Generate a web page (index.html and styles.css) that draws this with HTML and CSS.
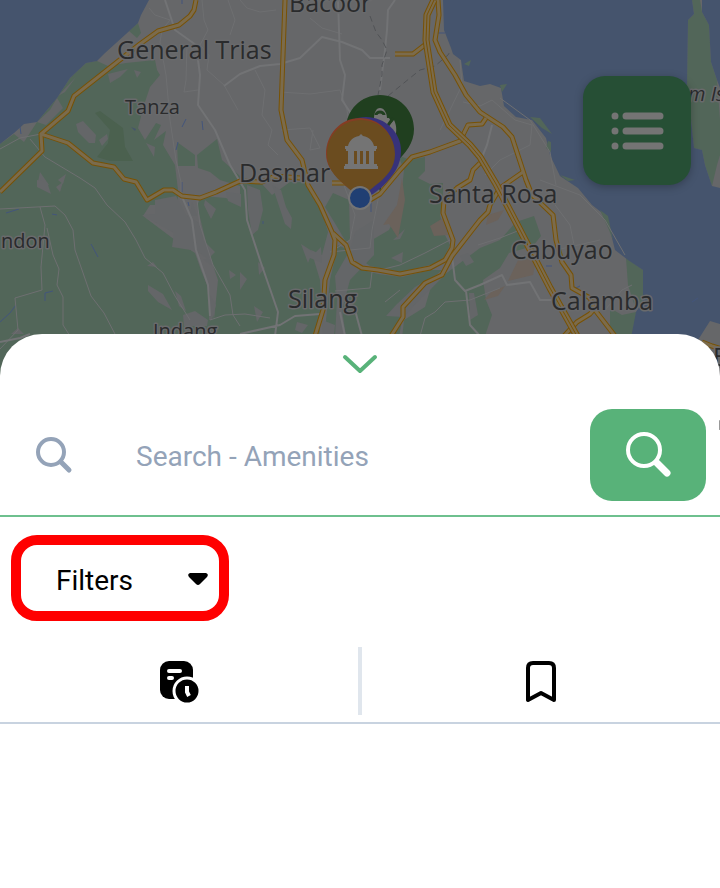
FILE: index.html
```html
<!DOCTYPE html>
<html lang="en">
<head>
<meta charset="utf-8">
<meta name="viewport" content="width=device-width, initial-scale=1">
<title>Amenities map</title>
<link rel="stylesheet" href="styles.css">
</head>
<body>
<section class="map" aria-label="Map">
<svg class="map-canvas" viewBox="0 0 720 376" preserveAspectRatio="xMidYMin slice" role="img" aria-label="Map of Cavite and Laguna">
  <defs>
    <g id="highways">
      <path d="M196 0L194 10 190 16 179 25 158 31 140 44 74 96 68 111 41 134 42 151 0 192"/>
      <path d="M41 134L68 143 93 163 114 167 124 179 136 182 147 200 164 190 173 190 182 196 200 198 216 192 240 181 262 182 275 176 300 178"/>
      <path d="M285 0L281 110 287 140 302 160 308 185 320 205 332 232 335 240 334 255 325 280 323 310 315 336"/>
      <path d="M333 233L346 245 352 262 362 268 378 270 400 274 430 268 445 260 452 248 453 240 443 213 444 200 457 188 470 180 473 170 480 163"/>
      <path d="M391 336L403 317 403 307 425 283 442 275 452 256 480 220 488 212 490 205 500 188 523 172"/>
      <path d="M438 0L439 15 435 40 440 52 455 75 466 95 480 112 503 127 512 137 526 180 532 195 553 215 556 240 562 262 571 275 572 288 590 298 595 310 615 336"/>
      <path d="M395 54L413 54 426 44M370 200L380 194 400 170 412 157 430 152 460 141 468 125 482 124 486 118M564 336L577 322 590 314 595 308M702 342L712 346 722 349M332 183L346 183"/>
    </g>
    <g id="expressway">
      <path d="M434 0L427 15 426 40 434 92 449 125 470 145 480 157 496 184 520 230 550 288 578 338"/>
    </g>
  </defs>

  <rect class="land" width="720" height="376"/>

  <g class="green">
    <path d="M37 122L57 98 70 78 86 63 97 61 108 66 126 63 155 60 157 70 160 75 150 87 144 105 138 128 145 140 156 123 161 125 154 140 166 131 163 145 175 165 178 190 178 205 150 205 143 216 175 240 195 253 201 270 209 290 214 320 218 280 208 250 203 230 197 205 202 196 226 198 240 205 240 182 262 184 272 195 290 182 306 182 320 205 328 232 322 255 311 250 320 280 322 310 315 376 0 376 0 144 14 134 24 142z"/>
    <path d="M177 142L195 155 195 166 178 166zM197 155L217 139 222 160 240 176 240 186 220 180 210 172 198 168zM138 23L141 33 137 38 129 31z"/>
    <path d="M338 245L348 250 355 268 378 274 402 277 430 270 442 270 424 286 402 306 402 320 392 376 326 376 326 320 330 280zM333 193L349 200 350 240 346 242 336 225 325 207zM398 155L410 160 425 157 425 171 418 178 430 184 443 183 443 200 440 215 445 235 450 245 442 262 402 272 370 266 360 259 372 240 389 230 397 214 402 190 404 170z"/>
    <path d="M444 275L480 248 500 240 516 222 534 216 541 236 533 246 509 253 500 268 483 280 486 300 492 315 486 333 480 376 398 376 404 320 425 307 430 290z"/>
    <path d="M610 308L622 315 636 312 631 376 610 376zM626 258L643 270 643 300 636 310 628 285z"/>
    <path d="M692 0L700 0 702 12 709 25 711 62 717 80 720 120 720 155 717 165 712 186 705 165 702 150 694 148 690 110 687 85 688 20 694 14z"/>
  </g>

  <path class="forest" d="M95 113L100 111 123 128 125 147 133 161 110 161 97 157 108 143 110 130z"/>
  <g class="clearing">
    <path d="M76 77L58 96 65 92zM57 98L63 108 46 125 37 122 50 110zM76 124L83 121 96 135 95 143 89 143 78 132zM99 140L107 134 108 139 102 146zM134 70L141 72 137 78zM108 74L128 69 120 77 110 83zM40 172L49 185 37 187zM58 180L66 174 63 184zM146 143L155 147 154 157z"/>
    <path d="M37 180L47 182 51 194 37 187zM56 187L63 182 60 192zM155 200L176 196 186 215 201 224 203 240 215 252 208 259 197 251 172 247 174 233 142 215 155 214zM192 202L197 216 190 216zM205 200L216 209 211 219 204 205zM226 192L241 194 241 207 228 201zM153 262L157 267 147 266zM148 285L163 294 172 310 158 302 148 291zM175 291L181 296 186 311 179 306zM183 315L195 311 208 320 207 326 184 326zM11 334L18 328 24 334zM229 270L236 275 230 279zM203 259L210 259 212 266zM210 295L216 305 212 320 209 320z"/>
    <path d="M247 185L260 190 263 210 258 230 252 235 248 210zM272 185L281 190 286 207 292 218 291 229 285 224zM301 244L315 253 321 247 322 263 310 258 308 263zM240 272L247 279 240 290zM258 262L265 268 259 275zM297 322L308 325 302 333 295 330zM322 320L335 325 334 336 323 336zM391 258L403 252 402 263zM393 240L405 229 400 239zM425 281L442 278 421 298 404 317 386 316 396 305 415 287zM254 306L263 312 257 322zM335 276L350 250 355 232 374 220 374 255 350 280 342 310 346 336 335 336 337 300z"/>
    <path d="M460 256L468 253 474 262 466 266zM469 293L474 293 478 315 470 320z"/>
  </g>
  <g class="built">
    <path d="M402 178L405 200 398 238 389 224 383 225 397 205zM430 226L443 218 448 235 434 236zM520 256L536 260 533 275 508 281zM484 300L491 292 505 286 498 296zM488 215L504 210 498 220 486 225z"/>
  </g>

  <g class="water">
    <path d="M0 0H149L141 15 138 23 126 34 105 53 97 61 86 63 70 78 57 98 37 122 24 124 14 133 0 144z"/>
    <path d="M443 0L444 30 451 48 453 54 461 60 464 81 480 86 490 84 501 88 504 106 516 117 532 120 546 138 550 155 560 176 578 188 592 205 601 212 608 222 615 250 628 260 643 270 643 300 636 312 631 338 631 376 692 376 698 340 710 321 720 324 720 188 712 186 705 165 702 150 694 148 690 110 687 85 688 20 694 14 692 0z"/>
    <path d="M702 0L702 12 709 25 711 62 717 80 720 88V0zM131 127L136 129 135 131z"/>
  </g>
  <path class="green" d="M464 64L471 60 469 66zM500 85L507 84 502 92zM548 141L551 142 551 152 546 148zM530 117L540 118 552 134 542 128zM560 175L575 180 568 181zM600 210L608 216 613 240 609 230z"/>
  <g class="stream">
    <path d="M182 0V4M20 127L21 134M186 119L182 127M202 121L203 130M182 182V192M176 150L178 142M6 213L19 209M91 244L98 257M0 322L10 313 16 305M45 301V293L53 291M52 214L57 215M371 203V212M263 221V224M546 266H552M574 289L580 286M692 302L698 298M438 33H445M188 202L189 206"/>
  </g>

  <g class="street">
    <path d="M149 8L155 15 170 20 162 30 160 42 166 75 170 120 176 160 181 182V200M202 0L204 20 208 30 200 45 209 55 207 70 224 85 238 110M228 0L235 20 230 35M187 45L186 80 184 92 198 90M41 134L20 138 0 149M30 139L45 157 80 178 95 188 107 205 125 222 136 240 145 258 163 273 175 296 190 320M0 209L55 206 65 215 73 230 75 250 82 270 91 296 104 313 116 336M40 207L45 225 41 267 42 290 15 298 18 330 0 349M47 228L53 255 59 269 57 285 63 297 63 325 70 336"/>
    <path d="M197 200L200 225 213 265 230 295 233 315 240 326M210 320L225 315 245 314 270 318M240 0L247 8 260 12 276 10M255 70L265 90 262 115 272 130 268 145 278 155M280 92L310 94 340 90 347 110 350 130M281 130L310 128 320 148 310 150 313 130M310 18L322 28 342 34M342 180L355 215 350 240 330 252 370 248 372 230 378 200 378 150M335 291L370 288 372 272 400 265 425 253 450 240M478 245L500 238 520 230M460 60L462 85 450 110 440 130M463 102L480 106 492 100 515 120 532 125 530 145 500 160 485 175M500 98L530 120 550 152 556 185M555 205L570 225 575 250 600 256M540 180L580 195 605 220 625 255M632 285L622 290 605 310M420 336L425 318 435 312 445 302 470 300 500 288M556 250L600 240M385 302L400 290"/>
  </g>
  <g class="road">
    <path d="M165 0L175 30 196 45 200 75 198 105 215 130 230 165 245 190 247 220 260 260 278 312 275 336M224 86L240 74 260 66 280 64 300 58 322 37 342 42 362 50 370 58 390 58M338 0L340 60 345 75 342 100 352 115M395 0L388 10 387 30 385 50 380 90M0 342L20 338 30 334M240 334L280 325 295 316 320 314M180 192L192 220 196 250 208 285 210 316M452 256L455 280 465 291 480 285 502 275 507 285 530 282 540 300 552 300M466 291L470 325 480 336M355 310L362 336M340 312L345 336M492 125L487 145 480 162"/>
  </g>
  <path class="rail" d="M370 16L376 32 382 40 387 50 382 65 382 75 378 95M388 96L410 78 420 70 435 66 448 55 451 50"/>

  <use class="highway-edge" href="#highways"/><use class="highway-fill" href="#highways"/>
  <use class="express-edge" href="#expressway"/><use class="express-fill" href="#expressway"/>
  <use class="express-line" href="#expressway"/>

  <g class="label">
    <text x="289" y="12">Bacoor</text>
    <text x="117" y="59">General Trias</text>
    <text class="small" x="125" y="114">Tanza</text>
    <text x="239" y="182">Dasmar</text>
    <text x="429" y="203">Santa Rosa</text>
    <text x="511" y="259">Cabuyao</text>
    <text x="551" y="310">Calamba</text>
    <text x="288" y="308">Silang</text>
    <text class="small" x="1" y="248">ndon</text>
    <text class="small" x="153" y="338">Indang</text>
    <text class="italic" x="688" y="101">m Is</text>
    <text x="713" y="366">B</text>
  </g>

  <g class="markers">
    <path class="pin-green" d="M380 95c19 0 34 15 34 34 0 14-8 24-19 34-8 8-12 20-15 28-3-8-7-20-15-28-11-10-19-20-19-34 0-19 15-34 34-34z"/>
    <g class="glyph"><path d="M371 121l2-3h1c0-5 2-10 6-10s7 5 7 10h2l2 3-6 12h-10zM394 120c3 6 3 13 0 20l-12-6z"/><path class="cut" d="M376 115a4 3 0 0 1 8 0M393 118L382 134"/></g>
    <path class="pin-violet" d="M366 117c19 0 35 15 35 34 0 14-7 24-18 35-7 6-12 10-21 13l-31-48c0-19 16-34 35-34z"/>
    <path class="pin-red" d="M360 118c19 0 34 15 34 34l-34 46c-10-10-34-24-34-44 0-20 15-36 34-36z"/>
    <path class="pin-amber" d="M361 120c19 0 34 15 34 34 0 13-8 23-19 31-6 5-10 8-16 14-5-6-10-9-15-14-11-9-18-18-18-31 0-19 15-34 34-34z"/>
    <g class="glyph"><path d="M345 146h32v3h-1v2h-2v13h3v2h1v3h-34v-3h1v-2h3v-13h-2v-2h-1zM348 146c1-5 5-9 11-10l2-2 2 2c6 1 10 5 11 10z"/><path class="window" d="M354 151h3v13h-3zM360 151h3v13h-3zM366 151h3v13h-3z"/></g>
    <circle class="here" cx="360" cy="198" r="11"/>
  </g>
</svg>
<button class="list-button" type="button" aria-label="Show list">
  <svg viewBox="0 0 54 40" width="54" height="40"><path class="list-lines" d="M16 5H50M16 20H50M16 35H50M5 5h0M5 20h0M5 35h0"/></svg>
</button>
</section>

<main class="sheet">
  <button class="collapse" type="button" aria-label="Collapse panel">
    <svg viewBox="0 0 36 20" width="36" height="20"><path d="M3 3L18 17 33 3"/></svg>
  </button>
  <form class="search">
    <label class="search-label" for="amenity" aria-label="Search amenities">
      <svg viewBox="0 0 38 38" width="38" height="38"><circle cx="16" cy="16" r="13"/><path class="handle" d="M26 26L34 34"/></svg>
    </label>
    <input id="amenity" type="text" placeholder="Search - Amenities">
    <button class="search-button" type="button" aria-label="Search">
      <svg viewBox="0 0 48 48" width="48" height="48"><circle cx="20" cy="19" r="16"/><path class="handle" d="M33 32L43 42"/></svg>
    </button>
    <span class="next-chip"></span>
  </form>
  <div class="filter-row">
    <div class="filter">
      <select aria-label="Filters"><option>Filters</option></select>
      <svg class="caret" viewBox="0 0 22 14" width="22" height="14"><path d="M3 1H19q3 1 1 4L13 12q-2 2-4 0L2 5Q0 2 3 1z"/></svg>
    </div>
  </div>
  <nav class="tabs">
    <button class="tab" type="button" aria-label="Recent">
      <svg viewBox="0 0 40 44" width="40" height="44"><rect x="1" y="1" width="33" height="38" rx="9"/><path class="paper" d="M10 11H21M10 18H13"/><circle class="clock" cx="28" cy="31" r="13"/><path class="hand" d="M28 26V32L30 36"/></svg>
    </button>
    <button class="tab" type="button" aria-label="Bookmarks">
      <svg viewBox="0 0 32 44" width="32" height="44"><path class="bookmark" d="M3 40V8Q3 3 8 3H24Q29 3 29 8V40L16 33z"/></svg>
    </button>
  </nav>
</main>
</body>
</html>
```
FILE: styles.css
```css
* { box-sizing: border-box; }
body { margin: 0; background: #fff; font-family: Roboto, "Liberation Sans", sans-serif; overflow-x: hidden; }
button { border: 0; padding: 0; background: none; color: inherit; font: inherit; cursor: pointer; }
svg { display: block; }

.map { position: relative; background: #45546d; }
.map-canvas { width: 100%; height: 376px; }
.land { fill: #666769; }
.green { fill: #526659; }
.forest { fill: #4b614f; }
.clearing { fill: #646668; }
.built { fill: #6b625b; }
.water { fill: #45546d; }
.stream, .street, .road, .rail, .highway-edge, .highway-fill, .express-edge, .express-fill, .express-line { fill: none; stroke-linejoin: round; }
.stream { stroke: #43557c; stroke-width: 1; }
.street { stroke: #6e6f71; stroke-width: 1; }
.road { stroke: #727375; stroke-width: 2; }
.rail { stroke: #515356; stroke-width: 1; stroke-dasharray: 6 4; }
.highway-edge { stroke: #785205; stroke-width: 5; }
.highway-fill { stroke: #7b6b4c; stroke-width: 3; }
.express-edge { stroke: #785205; stroke-width: 7; }
.express-fill { stroke: #7b6b4c; stroke-width: 5; }
.express-line { stroke: #785205; stroke-width: 1; }

.label { font-family: "Open Sans", "Noto Sans", sans-serif; font-size: 25px; fill: #2a2b2c; stroke: #696a6c; stroke-width: 3px; paint-order: stroke; stroke-linejoin: round; }
.label .small { font-size: 20px; }
.label .italic { font-size: 20px; font-style: italic; }

.pin-green { fill: #203f1f; }
.pin-violet { fill: #37327a; }
.pin-red { fill: #853c24; }
.pin-amber { fill: #6b4c1f; }
.glyph { fill: #747474; }
.cut { fill: none; stroke: #203f1f; stroke-width: 3; }
.window { fill: #6b4c1f; }
.here { fill: #203f73; stroke: #747474; stroke-width: 2; }

.list-button { position: absolute; top: 76px; right: 29px; width: 108px; height: 109px; display: grid; place-items: center; border-radius: 22px; background: #264f35; box-shadow: 0 2px 8px rgba(0, 0, 0, 0.25); }
.list-lines { fill: none; stroke: #747474; stroke-width: 7; stroke-linecap: round; }

.sheet { position: relative; margin-top: -42px; border-radius: 42px 42px 0 0; background: #fff; }
.collapse { display: block; margin: 0 auto; padding: 20px 20px 0; }
.collapse path { fill: none; stroke: #58b279; stroke-width: 4; stroke-linecap: round; stroke-linejoin: round; }

.search { position: relative; display: flex; align-items: center; margin-top: 20px; padding: 15px 14px 14px 35px; border-bottom: 2px solid #6ec08e; }
.search-label { flex: none; width: 101px; }
.search circle, .search .handle { fill: none; stroke: #94a3b8; stroke-width: 4; }
.search .handle { stroke-width: 5; stroke-linecap: round; }
.search input { flex: 1; min-width: 0; height: 48px; border: 0; padding: 2px 0 0; outline: 0; background: none; font: 28px/32px Roboto, sans-serif; color: #0f172a; }
.search input::placeholder { color: #94a3b8; opacity: 1; }
.search-button { flex: none; width: 116px; height: 92px; display: grid; place-items: center; border-radius: 22px; background: #58b279; }
.search-button circle { stroke: #fff; }
.search-button .handle { stroke: #fff; stroke-width: 7; }
.next-chip { position: absolute; right: 0; top: 26px; width: 1px; height: 10px; border-radius: 1px; background: #999; }

.filter-row { padding: 18px 11px 26px; }
.filter { display: grid; align-items: center; width: 218px; height: 86px; border: 10px solid #f00; border-radius: 26px; }
.filter select, .caret { grid-area: 1 / 1; }
.filter select { appearance: none; width: 100%; height: 66px; border: 0; padding: 6px 35px 0; background: none; color: #000; font: 28px/32px Roboto, sans-serif; }
.caret { justify-self: end; margin: 2px 10px 0 0; pointer-events: none; }

.tabs { display: flex; padding-bottom: 7px; border-bottom: 2px solid #c8d3e0; }
.tab { flex: 1; height: 68px; padding-top: 2px; display: grid; place-items: center; }
.tab:first-child { border-right: 2px solid #e0e6ed; }
.tab:last-child { border-left: 2px solid #e0e6ed; }
.paper { fill: none; stroke: #fff; stroke-width: 4; stroke-linecap: round; }
.clock { stroke: #fff; stroke-width: 3; }
.hand { fill: none; stroke: #fff; stroke-width: 4; }
.bookmark { fill: none; stroke: #000; stroke-width: 4; stroke-linejoin: round; }
```
